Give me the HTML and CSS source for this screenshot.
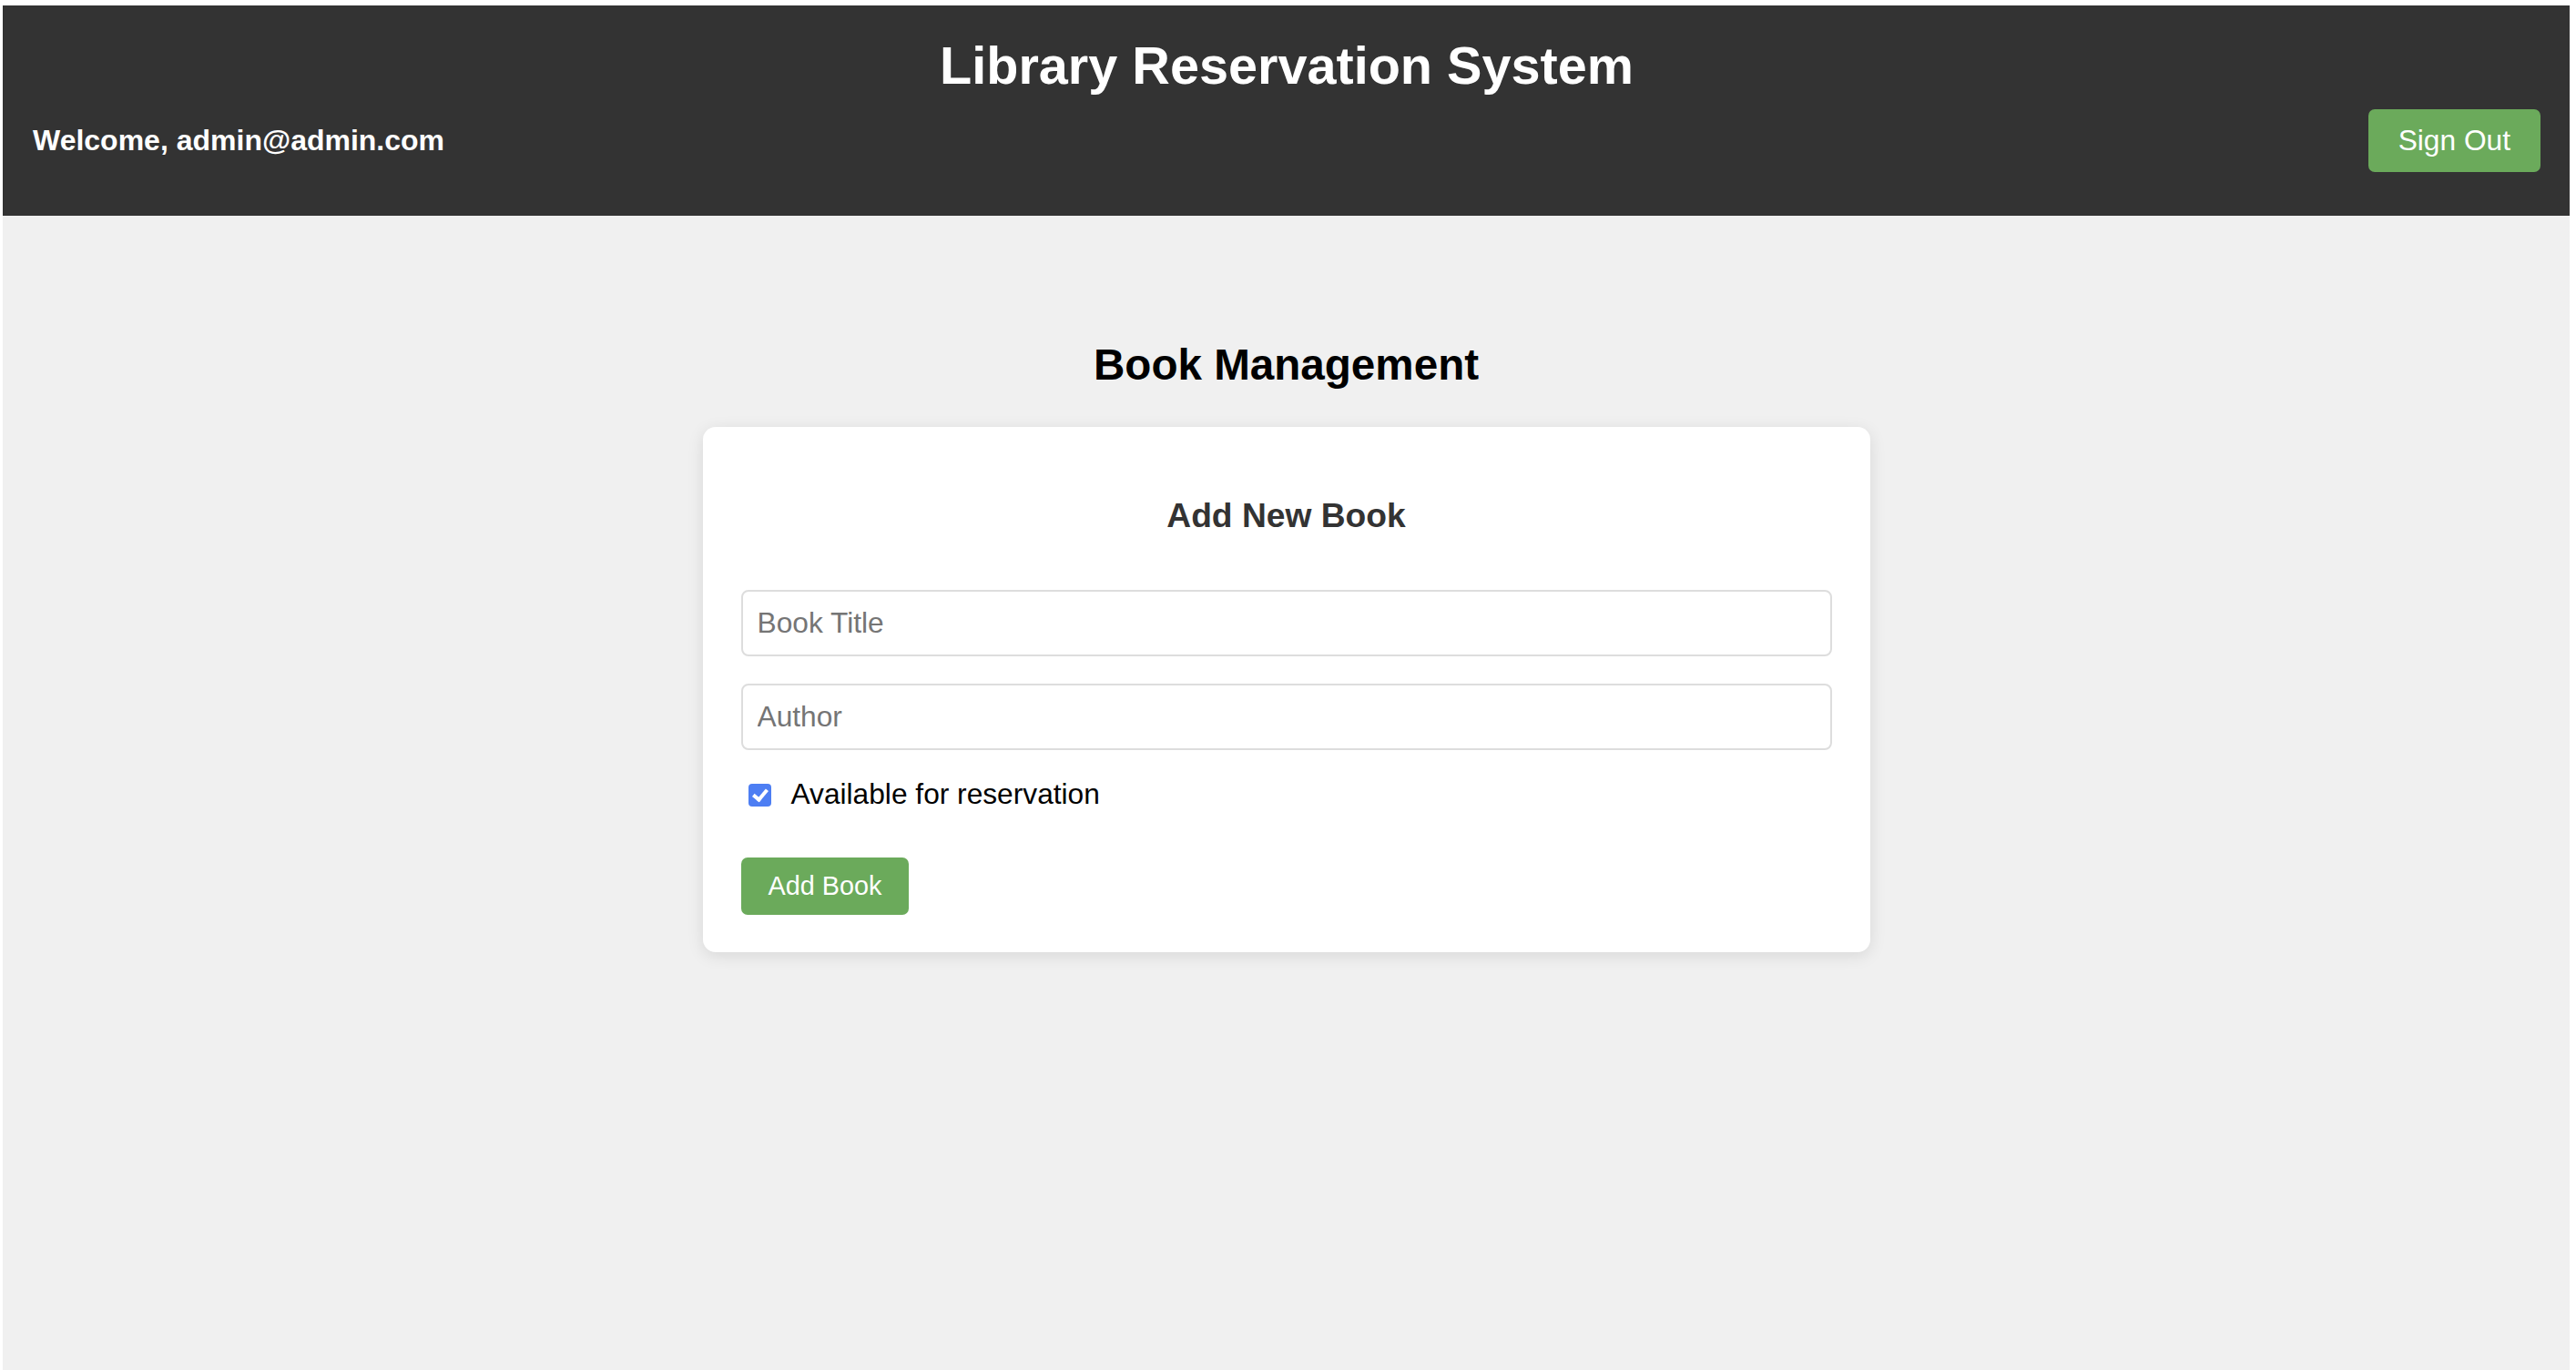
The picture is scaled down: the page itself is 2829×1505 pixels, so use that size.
FILE: index.html
```html
<!DOCTYPE html>
<html lang="en">
<head>
<meta charset="utf-8">
<title>Library Reservation System</title>
<link rel="stylesheet" href="styles.css">
</head>
<body>
<header class="app-header">
  <h1 class="app-title">Library Reservation System</h1>
  <div class="header-row">
    <span class="welcome">Welcome, admin@admin.com</span>
    <button class="btn btn-signout" type="button">Sign Out</button>
  </div>
</header>
<main class="main">
  <h2 class="page-title">Book Management</h2>
  <section class="card">
    <h3 class="card-title">Add New Book</h3>
    <form class="book-form">
      <input class="text-input" type="text" placeholder="Book Title">
      <input class="text-input" type="text" placeholder="Author">
      <label class="check-row">
        <input class="check" type="checkbox" checked>
        <span>Available for reservation</span>
      </label>
      <button class="btn btn-add" type="button">Add Book</button>
    </form>
  </section>
</main>
</body>
</html>
```

FILE: styles.css
```css
html {
  background: #ffffff;
}

body {
  margin: 6px 7px 0 3px;
  min-height: calc(100vh - 6px);
  background: #f0f0f0;
  font-family: "Liberation Sans", Arial, sans-serif;
  font-size: 31.7px;
  color: #000;
}

.app-header {
  background: #333333;
  color: #ffffff;
  padding: 33px 32px 48px 33px;
}

.app-title {
  margin: 0;
  font-size: 57.6px;
  font-weight: bold;
  line-height: normal;
  text-align: center;
}

.header-row {
  margin-top: 15px;
  display: flex;
  justify-content: space-between;
  align-items: center;
}

.welcome {
  font-weight: bold;
  font-size: 32px;
}

.btn {
  border: none;
  color: #ffffff;
  background: #6baa5b;
  font-family: "Liberation Sans", Arial, sans-serif;
  line-height: normal;
  cursor: pointer;
}

.btn-signout {
  font-size: 31.7px;
  padding: 16px 33px;
  border-radius: 7px;
}

.main {
  padding-top: 136px;
}

.page-title {
  margin: 0 0 41px;
  text-align: center;
  font-size: 47.6px;
  font-weight: bold;
  line-height: normal;
}

.card {
  box-sizing: border-box;
  width: 1282px;
  margin: 0 auto;
  padding: 42px 42px 41px;
  background: #ffffff;
  border-radius: 14px;
  box-shadow: 0 4px 18px rgba(0, 0, 0, 0.1);
}

.card-title {
  margin: 34px 0 60px;
  text-align: center;
  color: #333333;
  font-size: 37.2px;
  font-weight: bold;
  line-height: normal;
}

.book-form {
  display: flex;
  flex-direction: column;
  align-items: flex-start;
}

.text-input {
  box-sizing: border-box;
  width: 100%;
  margin: 0 0 30px;
  padding: 16px 16px;
  border: 2px solid #dddddd;
  border-radius: 8px;
  font-family: "Liberation Sans", Arial, sans-serif;
  font-size: 31.7px;
  line-height: normal;
  color: #000;
  background: #fff;
  outline: none;
}

.text-input::placeholder {
  color: #757575;
}

.check-row {
  display: flex;
  align-items: center;
  font-size: 31.7px;
  line-height: normal;
  margin-bottom: 51px;
}

.check {
  appearance: none;
  -webkit-appearance: none;
  position: relative;
  width: 25px;
  height: 25px;
  margin: 2px 22px 0 8px;
  border-radius: 4px;
  background: #4d7ef3;
}

.check::after {
  content: "";
  position: absolute;
  left: 8px;
  top: 3px;
  width: 6px;
  height: 12px;
  border: solid #ffffff;
  border-width: 0 4px 4px 0;
  transform: rotate(40deg);
}

.btn-add {
  font-size: 28.8px;
  padding: 15px 30px;
  border-radius: 7px;
}
```
